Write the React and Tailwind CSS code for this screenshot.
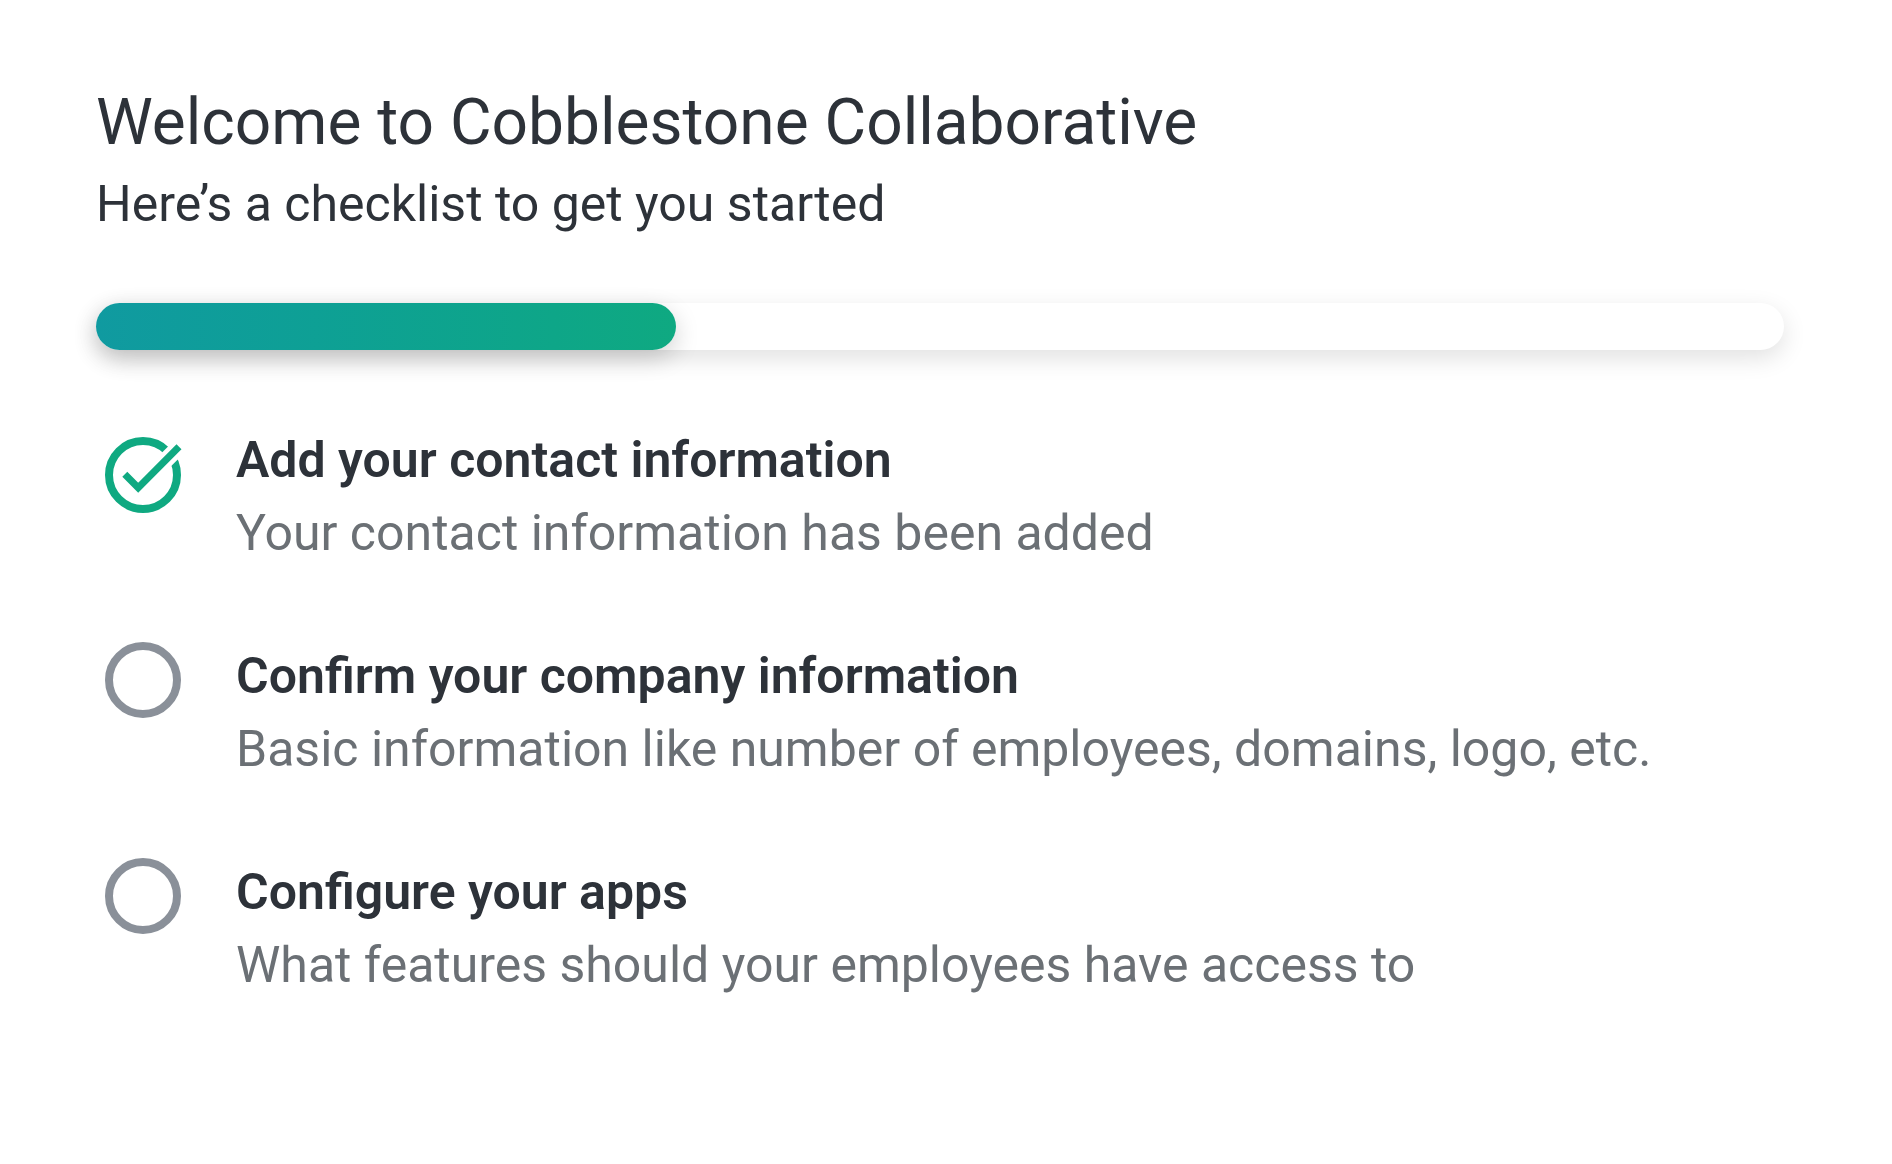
function Check() {
  return (
    <svg viewBox="0 0 76 76" className="w-[76px] h-[76px] shrink-0 mt-[11px] overflow-visible" fill="none">
      <circle cx="38" cy="38" r="34" stroke="#0fa981" strokeWidth="8" />
      <path d="M33.2 50.7 L88 -4" stroke="#ffffff" strokeWidth="16" />
      <path d="M19.8 37.2 L33.2 50.7 L74 9.7" stroke="#0fa981" strokeWidth="7" />
    </svg>
  );
}
function Ring() {
  return (
    <svg viewBox="0 0 76 76" className="w-[76px] h-[76px] shrink-0" fill="none">
      <circle cx="38" cy="38" r="34" stroke="#8a9099" strokeWidth="8" />
    </svg>
  );
}
const items = [
  { done: true, t: "Add your contact information", d: "Your contact information has been added" },
  { t: "Confirm your company information", d: "Basic information like number of employees, domains, logo, etc." },
  { t: "Configure your apps", d: "What features should your employees have access to" },
];
export default function App() {
  return (
    <div className="min-h-[1164px] bg-white px-[96px] pt-[84px] font-['Roboto',sans-serif]">
      <h1 className="text-[64px] leading-[78px] font-normal text-[#2d3239]">Welcome to Cobblestone Collaborative</h1>
      <p className="mt-[10px] text-[50px] leading-[64px] text-[#2d3239]">Here’s a checklist to get you started</p>
      <div className="mt-[67px] h-[47px] w-[1688px] rounded-[23.5px] bg-white shadow-[0_8px_24px_rgba(0,0,0,0.12)]">
        <div className="h-full w-[580px] rounded-[23.5px] bg-gradient-to-r from-[#109aa0] to-[#0fa981] shadow-[0_8px_24px_rgba(0,0,0,0.18)]" />
      </div>
      <div className="mt-[76px] flex flex-col gap-[73px]">
        {items.map((it) => (
          <div key={it.t} className="flex">
            <div className="ml-[9px] w-[131px] shrink-0">{it.done ? <Check /> : <Ring />}</div>
            <div className="-mt-[2px]">
              <div className="text-[50px] leading-[72px] font-semibold text-[#2d3239]">{it.t}</div>
              <div className="mt-[1px] text-[50px] leading-[72px] text-[#6b7075]">{it.d}</div>
            </div>
          </div>
        ))}
      </div>
    </div>
  );
}
